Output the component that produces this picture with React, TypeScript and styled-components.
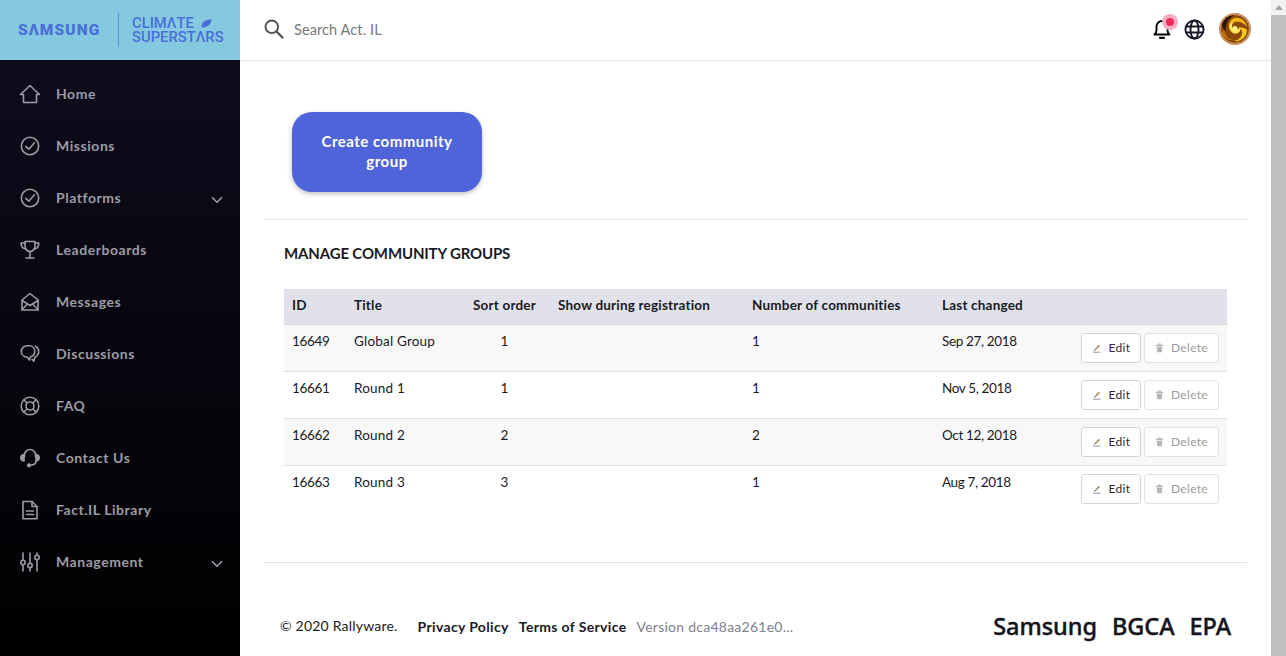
import React from "react";
import styled, { createGlobalStyle } from "styled-components";
import { ChevronDown } from "lucide-react";

const GlobalStyle = createGlobalStyle`
  html, body { margin: 0; padding: 0; height: 100%; overflow: hidden; }
  body { font-family: "Lato", "Open Sans", sans-serif; color: #1a1a24; background: #fff; }
  * { box-sizing: border-box; }
`;

type RowS = { id: number; title: string; sort: number; count: number; changed: string };

const rows: RowS[] = [
  { id: 16649, title: "Global Group", sort: 1, count: 1, changed: "Sep 27, 2018" },
  { id: 16661, title: "Round 1", sort: 1, count: 1, changed: "Nov 5, 2018" },
  { id: 16662, title: "Round 2", sort: 2, count: 2, changed: "Oct 12, 2018" },
  { id: 16663, title: "Round 3", sort: 3, count: 1, changed: "Aug 7, 2018" },
];

const NavSvg = styled.svg.attrs({
  width: 22,
  height: 22,
  viewBox: "0 0 22 22",
  fill: "none",
  stroke: "currentColor",
  strokeWidth: 1.6,
  strokeLinecap: "round",
  strokeLinejoin: "round",
})``;

const HomeIcon = () => (
  <NavSvg>
    <path d="M1.500 11.500 11 2.500l9.500 9H17.500v8H4.500v-8z" />
  </NavSvg>
);

const CheckIcon = () => (
  <NavSvg>
    <circle cx="11" cy="11" r="8.700" />
    <path d="M6.800 11.300 9.800 14.200 15.500 7.800" />
  </NavSvg>
);

const TrophyIcon = () => (
  <NavSvg strokeWidth={1.9}>
    <path d="M6 2.500h10v4.500c0 3-2.200 5.500-5 5.500S6 10 6 7z" />
    <path d="M6 4H2.200c0 3.500 1.300 5.600 4.500 6" />
    <path d="M16 4h3.800c0 3.500-1.300 5.600-4.500 6" />
    <path d="M11 12.500v6M7 19h8" />
  </NavSvg>
);

const EnvelopeIcon = () => (
  <NavSvg>
    <path d="M3 9 11 2.500 19 9v10H3z" />
    <path d="M3 9.500 11 14.500 19 9.500" />
    <path d="M3 18.500 8.500 13M19 18.500 13.500 13" />
  </NavSvg>
);

const ChatIcon = () => (
  <NavSvg>
    <path d="M9.500 2.500c-4 0-7.200 2.600-7.200 5.900 0 3.200 2.900 5.500 6.100 5.800l2.100 2.900.7-3.200c2.500-.8 4.600-2.800 4.600-5.500 0-3.300-2.400-5.900-6.300-5.900z" />
    <path d="M16.500 3.200c1.900 1.100 3.200 3 3.200 5.300 0 2.700-1.600 4.700-3.900 5.800l-1 4-1.800-2" />
  </NavSvg>
);

const BuoyIcon = () => (
  <NavSvg>
    <circle cx="11" cy="11" r="8.800" />
    <circle cx="11" cy="11" r="4" />
    <path d="M4.800 4.800 8 8M17.200 4.800 14 8M4.800 17.200 8 14M17.200 17.200 14 14" />
  </NavSvg>
);

const HeadsetIcon = () => (
  <NavSvg>
    <path d="M5.500 9.500V8a5.500 5.500 0 0 1 11 0v1.500" />
    <path d="M5 7.500v6.500C3 13.800 1.800 12.500 1.800 10.800S3 7.700 5 7.500z" fill="currentColor" />
    <path d="M17 7.500v6.500c2-.2 3.200-1.500 3.200-3.200S19 7.700 17 7.500z" fill="currentColor" />
    <path d="M16.800 14.500c0 2.200-1.800 3.500-5 3.500" />
    <circle cx="10" cy="18.300" r="1.300" fill="currentColor" />
  </NavSvg>
);

const FileIcon = () => (
  <NavSvg>
    <path d="M4 2.500h9l5 5v12.200H4z" />
    <path d="M13 2.500v5h5" />
    <path d="M7.500 12h7M7.500 15.500h7" />
  </NavSvg>
);

const SlidersIcon = () => (
  <NavSvg>
    <path d="M4 2v7M4 14v6M11 2v10M11 17v3M18 2v2M18 9v11" />
    <circle cx="4" cy="11.500" r="2.200" />
    <circle cx="11" cy="14.500" r="2.200" />
    <circle cx="18" cy="6.500" r="2.200" />
  </NavSvg>
);

const SearchIcon = () => (
  <svg width="20" height="20" viewBox="0 0 20 20" fill="none" stroke="#555" strokeWidth="2" strokeLinecap="round">
    <circle cx="7.800" cy="7.800" r="6.300" />
    <path d="M12.500 12.500 18.500 18.500" strokeWidth="2.400" />
  </svg>
);

const BellIcon = () => (
  <svg width="18" height="20" viewBox="0 0 18 20" fill="none" stroke="#000" strokeWidth="1.900" strokeLinecap="round" strokeLinejoin="round">
    <path d="M1.500 15.500C3 14.300 3.500 13 3.500 11V7.500a5.500 5.500 0 0 1 11 0V11c0 2 .5 3.300 2 4.500z" />
    <path d="M7 18.800h4" strokeWidth="2.200" />
  </svg>
);

const GlobeIcon = () => (
  <svg width="21" height="21" viewBox="0 0 22 22" fill="none" stroke="#16162a" strokeWidth="2">
    <circle cx="11" cy="11" r="9.500" />
    <ellipse cx="11" cy="11" rx="4.200" ry="9.500" />
    <path d="M2.500 7.800h17M2.500 14.200h17" />
  </svg>
);

const AvatarArt = () => (
  <svg width="28" height="28" viewBox="0 0 28 28">
    <rect width="28" height="28" fill="#8a4a06" />
    <path d="M0 0h13C7 4 4 9 5 16 2 14 0 10 0 6z" fill="#2a1608" />
    <path d="M14 3c6-1 11 3 12 9-3-4-7-6-12-5-3 .6-5 3-5 6-2-4 0-9 5-10z" fill="#f0b414" />
    <path d="M26 15c0 7-6 12-13 11 4-1 7-3 8-7 .8-3-1-5-3-6 3-1 6 0 8 2z" fill="#f6c820" />
    <path d="M3 15c1 6 5 10 10 10-4 1-9-1-11-5-1-2-.5-4 1-5z" fill="#c97a0a" />
    <path d="M8 12c1 5 5 8 9 6 2-1 3-3 2-6-1 2-3 3-5 2.500-2-.4-3-2-3-4 .1-1.500 1-2.500 2-3-3 0-5 2-5 4.500z" fill="#ffe45a" />
    <circle cx="14" cy="13.500" r="2.500" fill="#fff08a" />
  </svg>
);

const PenIcon = () => (
  <svg width="10" height="10" viewBox="0 0 10 10" fill="none">
    <path d="M1.500 7.500 6.800 1.800l1.300 1.200-5.200 4.800z" fill="#a08a70" />
    <path d="M1 9.200h7.500" stroke="#8a8a96" strokeWidth="0.9" />
  </svg>
);

const BinIcon = () => (
  <svg width="9" height="10" viewBox="0 0 9 10" fill="#b5b5b5">
    <rect x="3" y="0.500" width="3" height="1.300" />
    <rect x="0.800" y="1.800" width="7.400" height="1.400" />
    <path d="M1.800 3.800h5.400l-.4 5.400H2.200z" />
  </svg>
);

const navItems = [
  { label: "Home", icon: <HomeIcon /> },
  { label: "Missions", icon: <CheckIcon /> },
  { label: "Platforms", icon: <CheckIcon />, more: true },
  { label: "Leaderboards", icon: <TrophyIcon /> },
  { label: "Messages", icon: <EnvelopeIcon /> },
  { label: "Discussions", icon: <ChatIcon /> },
  { label: "FAQ", icon: <BuoyIcon /> },
  { label: "Contact Us", icon: <HeadsetIcon /> },
  { label: "Fact.IL Library", icon: <FileIcon /> },
  { label: "Management", icon: <SlidersIcon />, more: true },
];

const Page = styled.div`
  display: flex;
  height: 656px;
  overflow: hidden;
`;

const Sidebar = styled.aside`
  width: 240px;
  flex: none;
  display: flex;
  flex-direction: column;
  background: linear-gradient(180deg, #100d20 0%, #000 100%);
`;

const Brand = styled.div`
  height: 60px;
  flex: none;
  background: #84c9df;
  display: flex;
  align-items: center;
  padding-left: 18px;
  color: #4a6fd8;
`;

const Samsung = styled.span`
  font-family: "Roboto", sans-serif;
  font-weight: 900;
  font-size: 15.500px;
  letter-spacing: 1.100px;
  width: 100px;
`;

const BrandRule = styled.span`
  width: 1px;
  height: 34px;
  background: #5f8fdc;
  margin-right: 13px;
`;

const Climate = styled.div`
  font-family: "Roboto", sans-serif;
  font-weight: 500;
  font-size: 14.800px;
  line-height: 14px;
  letter-spacing: 0;
`;

const ClimateTop = styled.div`
  display: flex;
  align-items: center;
  gap: 7px;
`;

const Nav = styled.nav`
  padding-top: 8px;
  display: flex;
  flex-direction: column;
`;

const NavRow = styled.div`
  height: 52px;
  display: flex;
  align-items: center;
  padding: 0 14px 0 19px;
  color: #9c9ca3;
  font-size: 14px;
  font-weight: 700;
  letter-spacing: 0.550px;
`;

const NavIcon = styled.span`
  width: 37px;
  height: 24px;
  display: flex;
  align-items: center;
`;

const NavLabel = styled.span`
  flex: 1;
  padding-bottom: 2px;
`;

const NavChevron = styled.span`
  display: flex;
  padding-top: 4px;
`;

const Main = styled.main`
  flex: 1;
  min-width: 0;
  display: flex;
  flex-direction: column;
`;

const TopBar = styled.header`
  height: 61px;
  flex: none;
  border-bottom: 1px solid #e4e4e4;
  display: flex;
  align-items: center;
  padding: 0 20px 2px 24px;
`;

const SearchHint = styled.span`
  flex: 1;
  margin-left: 10px;
  font-size: 14.500px;
  letter-spacing: 0.100px;
  color: #777;
`;

const BellWrap = styled.span`
  position: relative;
  display: flex;
  margin-right: 13px;
`;

const BellDot = styled.span`
  position: absolute;
  top: -5px;
  left: 9px;
  width: 16px;
  height: 16px;
  border-radius: 50%;
  background: #f5adc4;

  &::after {
    content: "";
    position: absolute;
    top: 4px;
    left: 4px;
    width: 8px;
    height: 8px;
    border-radius: 50%;
    background: #ee2a5e;
  }
`;

const Avatar = styled.span`
  width: 32px;
  height: 32px;
  margin-left: 14px;
  border-radius: 50%;
  border: 2px solid #cf8a58;
  overflow: hidden;
  display: flex;
`;

const Content = styled.div`
  padding: 51px 24px 0;
`;

const CreateButton = styled.button`
  display: block;
  width: 190px;
  height: 80px;
  margin-left: 28px;
  padding: 0 20px 2px;
  border: 0;
  border-radius: 20px;
  background: #4e64d8;
  color: #fff;
  font-family: inherit;
  font-size: 15px;
  font-weight: 700;
  line-height: 20px;
  letter-spacing: 0.500px;
  box-shadow: 0 2px 5px rgba(0, 0, 0, 0.25);
`;

const Rule = styled.hr`
  margin: 0;
  border: 0;
  border-top: 1px solid #e2e2e2;
`;

const TopRule = styled(Rule)`
  margin-top: 27px;
`;

const Section = styled.section`
  padding: 0 20px;
`;

const Heading = styled.h2`
  margin: 24px 0 27px;
  font-size: 15px;
  line-height: 18px;
  font-weight: 700;
  letter-spacing: -0.150px;
  color: #1a1a24;
`;

const Table = styled.table`
  width: 100%;
  border-collapse: collapse;
  table-layout: fixed;
  font-size: 13.500px;
  letter-spacing: 0.200px;
`;

const HeadCell = styled.th<{ $center?: boolean }>`
  height: 35px;
  padding: ${(props) => (props.$center ? "0 11px 2px 8px" : "0 8px 2px")};
  background: #e1e1ea;
  border-bottom: 1px solid #d8d8e0;
  font-weight: 700;
  text-align: ${(props) => (props.$center ? "center" : "left")};
`;

const Row = styled.tr<{ $odd: boolean }>`
  height: 47px;
  background: ${(props) => (props.$odd ? "#f8f8f8" : "#fff")};
  border-bottom: 1px solid #e0e0e0;

  &:last-child {
    border-bottom: 0;
  }
`;

const Cell = styled.td<{ $center?: boolean; $figures?: boolean }>`
  padding: ${(props) => (props.$center ? "8px 11px 0 8px" : "8px 8px 0")};
  vertical-align: top;
  line-height: 16px;
  text-align: ${(props) => (props.$center ? "center" : "left")};
  letter-spacing: ${(props) => (props.$figures ? "-0.350px" : "inherit")};
`;

const Actions = styled.td`
  padding: 0 8px 0 0;
`;

const ActionRow = styled.div`
  display: flex;
  justify-content: flex-end;
  gap: 3px;
`;

const ActionButton = styled.button<{ $off?: boolean }>`
  height: 30px;
  display: flex;
  align-items: center;
  justify-content: center;
  gap: 7px;
  width: ${(props) => (props.$off ? "75px" : "60px")};
  background: #fff;
  border: 1px solid ${(props) => (props.$off ? "#e2e2e2" : "#d4d4d4")};
  border-radius: 3px;
  color: ${(props) => (props.$off ? "#9b9b9b" : "#2a2a34")};
  font-family: inherit;
  font-size: 12px;
  letter-spacing: 0.300px;
`;

const BottomRule = styled(Rule)`
  margin-top: 50px;
`;

const Footer = styled.footer`
  display: flex;
  align-items: center;
  height: 93px;
  padding: 33px 16px 0;
  font-size: 14px;
  letter-spacing: 0.200px;
`;

const Copyright = styled.span`
  margin-right: 20px;
  padding-bottom: 2px;
`;

const FooterLink = styled.a`
  margin-right: 10px;
  font-weight: 700;
  letter-spacing: 0.350px;
  color: #1a1a24;
`;

const Version = styled.span`
  flex: 1;
  color: #808088;
  letter-spacing: 0.250px;
`;

const Partner = styled.span`
  margin-left: 15px;
  font-family: "Noto Sans", "Lato", sans-serif;
  font-size: 23.500px;
  font-weight: 500;
  letter-spacing: -0.050px;
  -webkit-text-stroke: 0.4px #14141c;
  color: #14141c;
`;

const Scrollbar = styled.div`
  width: 15px;
  flex: none;
  display: flex;
  flex-direction: column;
  background: #f1f1f1;
`;

const ScrollArrow = styled.div`
  height: 15px;
  display: flex;
  align-items: center;
  justify-content: center;

  &::before {
    content: "";
    border-left: 4px solid transparent;
    border-right: 4px solid transparent;
    border-bottom: 5px solid #a3a3a3;
  }
`;

const ScrollThumb = styled.div`
  flex: 1;
  background: #c1c1c1;
`;

export default function App() {
  return (
    <Page>
      <GlobalStyle />
      <Sidebar>
        <Brand>
          <Samsung>SΛMSUNG</Samsung>
          <BrandRule />
          <Climate>
            <ClimateTop>
              CLIMΛTE
              <svg width="11" height="9" viewBox="0 0 11 9" fill="#4a6fd8">
                <path d="M0.500 8.500C0.500 3 4 .5 10.500 .5 10 6 6.500 8.500 0.500 8.500z" />
              </svg>
            </ClimateTop>
            SUPERSTΛRS
          </Climate>
        </Brand>
        <Nav>
          {navItems.map((item) => (
            <NavRow key={item.label}>
              <NavIcon>{item.icon}</NavIcon>
              <NavLabel>{item.label}</NavLabel>
              {item.more && (
                <NavChevron>
                  <ChevronDown size={18} strokeWidth={2.2} />
                </NavChevron>
              )}
            </NavRow>
          ))}
        </Nav>
      </Sidebar>
      <Main>
        <TopBar>
          <SearchIcon />
          <SearchHint>Search Act. IL</SearchHint>
          <BellWrap>
            <BellIcon />
            <BellDot />
          </BellWrap>
          <GlobeIcon />
          <Avatar>
            <AvatarArt />
          </Avatar>
        </TopBar>
        <Content>
          <CreateButton>Create community group</CreateButton>
          <TopRule />
          <Section>
            <Heading>MANAGE COMMUNITY GROUPS</Heading>
            <Table>
              <colgroup>
                <col style={{ width: 62 }} />
                <col style={{ width: 116 }} />
                <col style={{ width: 88 }} />
                <col style={{ width: 194 }} />
                <col style={{ width: 190 }} />
                <col style={{ width: 130 }} />
                <col />
              </colgroup>
              <thead>
                <tr>
                  <HeadCell>ID</HeadCell>
                  <HeadCell>Title</HeadCell>
                  <HeadCell $center>Sort order</HeadCell>
                  <HeadCell>Show during registration</HeadCell>
                  <HeadCell>Number of communities</HeadCell>
                  <HeadCell>Last changed</HeadCell>
                  <HeadCell />
                </tr>
              </thead>
              <tbody>
                {rows.map((row, index) => (
                  <Row key={row.id} $odd={index % 2 === 0}>
                    <Cell $figures>{row.id}</Cell>
                    <Cell>{row.title}</Cell>
                    <Cell $center>{row.sort}</Cell>
                    <Cell />
                    <Cell>{row.count}</Cell>
                    <Cell $figures>{row.changed}</Cell>
                    <Actions>
                      <ActionRow>
                        <ActionButton>
                          <PenIcon />
                          Edit
                        </ActionButton>
                        <ActionButton $off>
                          <BinIcon />
                          Delete
                        </ActionButton>
                      </ActionRow>
                    </Actions>
                  </Row>
                ))}
              </tbody>
            </Table>
          </Section>
          <BottomRule />
          <Footer>
            <Copyright>© 2020 Rallyware.</Copyright>
            <FooterLink>Privacy Policy</FooterLink>
            <FooterLink>Terms of Service</FooterLink>
            <Version>Version dca48aa261e0...</Version>
            <Partner>Samsung</Partner>
            <Partner>BGCA</Partner>
            <Partner>EPA</Partner>
          </Footer>
        </Content>
      </Main>
      <Scrollbar>
        <ScrollArrow />
        <ScrollThumb />
      </Scrollbar>
    </Page>
  );
}
